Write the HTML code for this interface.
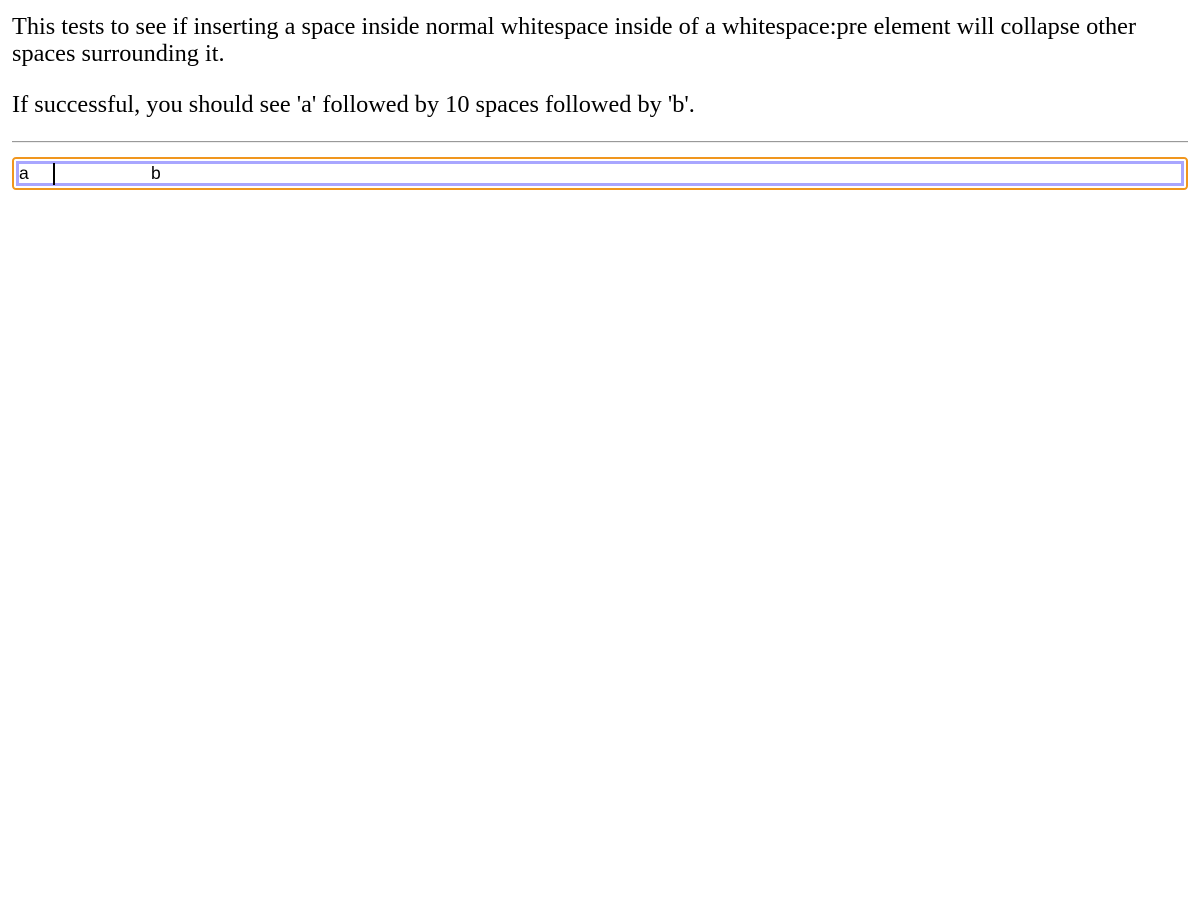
<!DOCTYPE html>
<html><head><style>
body{margin:0;background:#fff;}
.t{position:absolute;left:12px;font-family:"Liberation Serif",serif;font-size:24.3px;line-height:27px;color:#000;white-space:nowrap;}
.hr{position:absolute;left:12px;top:141px;width:1176px;height:0;border-top:1px solid #999;border-bottom:1px solid #eee;}
.box{position:absolute;left:12px;top:157px;width:1176px;height:33px;box-sizing:border-box;border:2px solid #f0961e;border-radius:4px;}
.inner{position:absolute;left:2px;top:2px;right:2px;bottom:2px;border:3px solid #a8a6ff;box-sizing:border-box;}
.txt{position:absolute;top:-1px;font-family:"Liberation Sans",sans-serif;font-size:17.5px;line-height:20px;color:#000;}
.caret{position:absolute;left:34px;top:-1px;width:2px;height:22px;background:#000;}
</style></head><body>
<div class="t" style="top:13px">This tests to see if inserting a space inside normal whitespace inside of a whitespace:pre element will collapse other<br>spaces surrounding it.</div>
<div class="t" style="top:91px">If successful, you should see 'a' followed by 10 spaces followed by 'b'.</div>
<div class="hr"></div>
<div class="box"><div class="inner"><div class="txt" style="left:0px">a</div><div class="txt" style="left:132px">b</div><div class="caret"></div></div></div>
</body></html>
